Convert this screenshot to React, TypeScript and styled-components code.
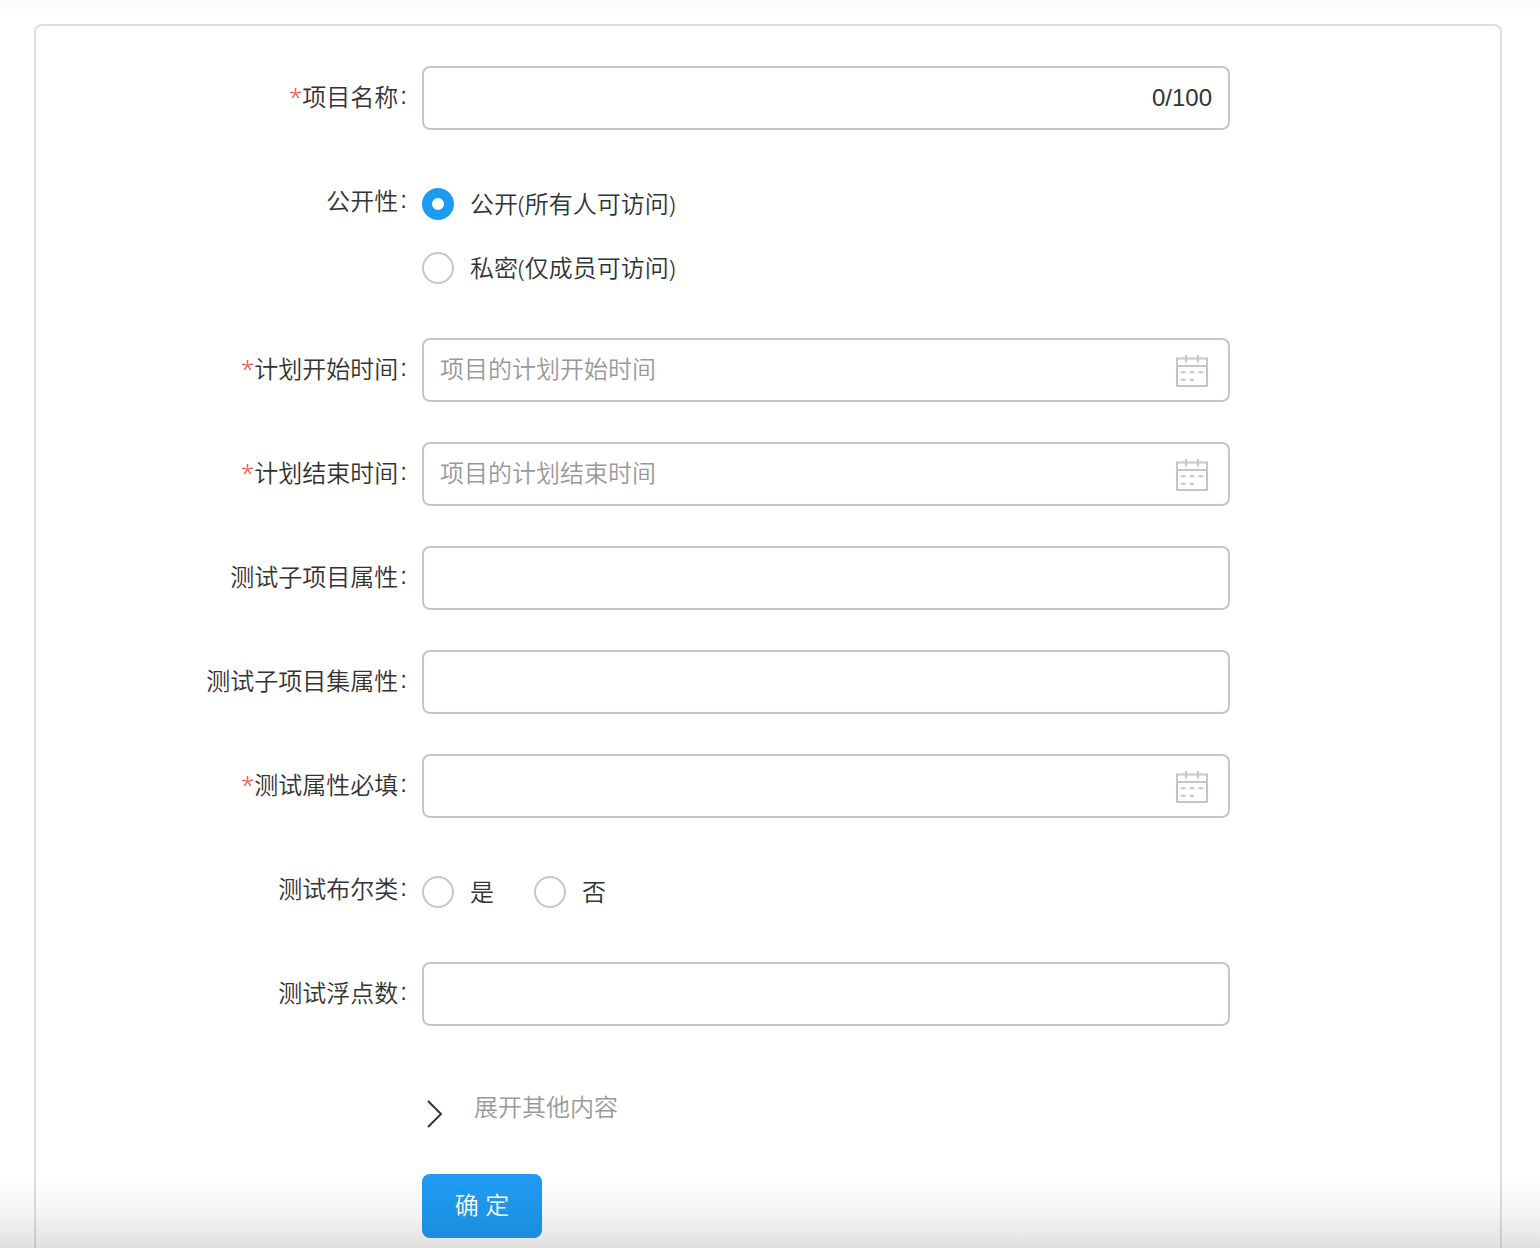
import React, { useState } from "react";
import styled, { createGlobalStyle } from "styled-components";

const color = {
  text: "#333333",
  muted: "#999999",
  control: "#c3c5d2",
  card: "#dddee4",
  primary: "#1e9bf0",
  required: "#f54a3e",
};

const GlobalStyle = createGlobalStyle`
  *, *::before, *::after { box-sizing: border-box; }
  body {
    margin: 0;
    background: #ffffff;
    color: ${color.text};
    font-family: "Liberation Sans", "Noto Sans CJK SC", sans-serif;
    font-size: 24px;
    font-weight: 350;
    line-height: 32px;
  }
  button, input { font: inherit; color: inherit; }
`;

const Page = styled.div`
  position: relative;
  height: 100vh;
  overflow: hidden;
`;

const Scroller = styled.main`
  height: 100%;
  overflow-y: auto;
  scrollbar-width: none;
  padding: 24px 38px 24px 34px;
  background: linear-gradient(#fafafa, #ffffff 12px);
`;

const Edge = styled.div`
  position: absolute;
  inset: auto 0 0 0;
  height: 72px;
  pointer-events: none;
  background: linear-gradient(rgba(0, 0, 0, 0), rgba(0, 0, 0, 0.04) 50%, rgba(0, 0, 0, 0.12));
`;

const Card = styled.form`
  display: flex;
  flex-direction: column;
  gap: 40px;
  padding: 40px 0;
  border: 2px solid ${color.card};
  border-radius: 8px;
  background: #ffffff;
`;

const Row = styled.div`
  display: grid;
  grid-template-columns: 386px minmax(0, 808px);
`;

const labelStyle = `
  display: block;
  padding: 16px 15px 8px 0;
  text-align: right;
`;

const Label = styled.label`
  ${labelStyle}
`;

const GroupLabel = styled.div`
  ${labelStyle}
`;

const Star = styled.span`
  color: ${color.required};
  font-family: "Noto Sans", sans-serif;
  line-height: 0;
`;

const Colon = styled.span`
  display: inline-block;
  margin-left: 2px;
  line-height: 24px;
  vertical-align: 2px;
`;

const Field = styled.div`
  display: flex;
  align-items: center;
  gap: 8px;
  height: 64px;
  padding: 0 16px;
  border: 2px solid ${color.control};
  border-radius: 8px;
  background: #ffffff;

  &:focus-within { border-color: ${color.primary}; }
`;

const TextInput = styled.input`
  flex: 1;
  min-width: 0;
  height: 100%;
  padding: 0;
  border: 0;
  outline: 0;
  background: transparent;

  &::placeholder { color: ${color.muted}; opacity: 1; }
`;

const Options = styled.div<{ $stacked?: boolean }>`
  display: flex;
  flex-direction: ${(p) => (p.$stacked ? "column" : "row")};
  column-gap: 40px;
  font-family: "Noto Sans", "Noto Sans CJK SC", sans-serif;
`;

const Option = styled.label`
  display: flex;
  align-items: center;
  gap: 16px;
  height: 64px;
  padding-top: 4px;
  cursor: pointer;
`;

const Radio = styled.input`
  appearance: none;
  width: 32px;
  height: 32px;
  margin: 0;
  border: 2px solid ${color.control};
  border-radius: 50%;
  background: #ffffff;

  &:checked { border: 10px solid ${color.primary}; }
`;

const Footer = styled.div`
  display: flex;
  flex-direction: column;
  align-items: flex-start;
  gap: 24px;
  grid-column: 2;
`;

const Expander = styled.button`
  display: flex;
  align-items: center;
  gap: 20px;
  height: 84px;
  padding: 0;
  border: 0;
  background: none;
  color: ${color.muted};
  cursor: pointer;
`;

const Chevron = styled.svg`
  width: 32px;
  height: 32px;
  margin-top: 12px;
`;

const Submit = styled.button`
  width: 120px;
  height: 64px;
  padding: 0;
  border: 0;
  border-radius: 8px;
  background: ${color.primary};
  color: #ffffff;
  cursor: pointer;
`;

function CalendarIcon() {
  return (
    <svg width="40" height="40" viewBox="0 0 40 40" fill="none" stroke={color.control} strokeWidth="2" aria-hidden="true">
      <path d="M5 8.5H35V36H5ZM5 16H35M14 5V12.5M26 5V12.5" />
      <path d="M9 22.3H13.5M17.7 22.3H22M26.5 22.3H31M9 29.7H13.5M17.7 29.7H22" />
    </svg>
  );
}

function Caption({ text, required }: { text: string; required?: boolean }) {
  return (
    <>
      {required && <Star>*</Star>}
      {text}
      <Colon>:</Colon>
    </>
  );
}

type TextRowProps = {
  id: string;
  label: string;
  required?: boolean;
  date?: boolean;
  placeholder?: string;
  max?: number;
};

function TextRow({ id, label, required, date, placeholder, max }: TextRowProps) {
  const [value, setValue] = useState("");
  return (
    <Row>
      <Label htmlFor={id}>
        <Caption text={label} required={required} />
      </Label>
      <Field>
        <TextInput
          id={id}
          type="text"
          value={value}
          maxLength={max}
          placeholder={placeholder}
          onChange={(e) => setValue(e.target.value)}
        />
        {max && <span>{value.length}/{max}</span>}
        {date && <CalendarIcon />}
      </Field>
    </Row>
  );
}

type RadioRowProps = {
  name: string;
  label: string;
  options: string[];
  initial?: string;
  stacked?: boolean;
};

function RadioRow({ name, label, options, initial, stacked }: RadioRowProps) {
  const [value, setValue] = useState(initial);
  return (
    <Row role="radiogroup" aria-labelledby={name + "-label"}>
      <GroupLabel id={name + "-label"}>
        <Caption text={label} />
      </GroupLabel>
      <Options $stacked={stacked}>
        {options.map((option) => (
          <Option key={option}>
            <Radio type="radio" name={name} checked={value === option} onChange={() => setValue(option)} />
            <span>{option}</span>
          </Option>
        ))}
      </Options>
    </Row>
  );
}

export default function App() {
  return (
    <Page>
      <GlobalStyle />
      <Scroller>
        <Card onSubmit={(e) => e.preventDefault()}>
          <TextRow id="name" label="项目名称" required max={100} />
          <RadioRow
            name="visibility"
            label="公开性"
            options={["公开(所有人可访问)", "私密(仅成员可访问)"]}
            initial="公开(所有人可访问)"
            stacked
          />
          <TextRow id="start" label="计划开始时间" required date placeholder="项目的计划开始时间" />
          <TextRow id="end" label="计划结束时间" required date placeholder="项目的计划结束时间" />
          <TextRow id="sub-project" label="测试子项目属性" />
          <TextRow id="sub-set" label="测试子项目集属性" />
          <TextRow id="required-field" label="测试属性必填" required date />
          <RadioRow name="boolean" label="测试布尔类" options={["是", "否"]} />
          <TextRow id="float" label="测试浮点数" />
          <Row>
            <Footer>
              <Expander type="button">
                <Chevron viewBox="0 0 32 32" fill="none" stroke={color.text} strokeWidth="2" aria-hidden="true">
                  <path d="M6 3L19 16L6 29" />
                </Chevron>
                <span>展开其他内容</span>
              </Expander>
              <Submit type="submit">确 定</Submit>
            </Footer>
          </Row>
        </Card>
      </Scroller>
      <Edge />
    </Page>
  );
}
